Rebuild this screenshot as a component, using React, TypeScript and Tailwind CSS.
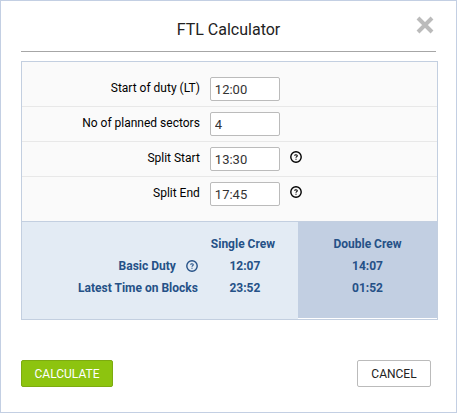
import { useState } from "react";

function HelpIcon() {
  return (
    <svg width="12" height="12" viewBox="0 0 12 12" fill="none" stroke="currentColor" aria-hidden="true">
      <circle cx="6" cy="6" r="5.2" strokeWidth="1.4" />
      <path d="M4.7 4.8C4.7 3.4 7.3 3.4 7.3 4.8C7.3 5.7 6 5.7 6 6.8" strokeWidth="1.1" />
      <path d="M6 7.7V8.8" strokeWidth="1.1" />
    </svg>
  );
}

function HelpButton({ label }: { label: string }) {
  return (
    <button type="button" aria-label={label} className="block size-3 cursor-pointer">
      <HelpIcon />
    </button>
  );
}

type FieldProps = { id: string; label: string; initial: string; help?: boolean };

function Field({ id, label, initial, help }: FieldProps) {
  const [value, setValue] = useState(initial);
  return (
    <div className="flex border-b border-[#e8e8e8] pt-[5px] pb-[5px] first:pt-[15px] last:border-b-0 last:pb-[15px]">
      <label htmlFor={id} className="w-3/7 pt-[3px] text-right leading-4">
        {label}
      </label>
      <input
        id={id}
        value={value}
        onChange={(e) => setValue(e.target.value)}
        className="ml-2.5 h-6 w-[70px] rounded-xs border border-[#bbbbbb] bg-white px-1 pt-px text-[13px] text-[#333333] outline-none"
      />
      {help && (
        <div className="ml-2.5 pt-1">
          <HelpButton label={`Help: ${label}`} />
        </div>
      )}
    </div>
  );
}

export default function App() {
  return (
    <div
      role="dialog"
      aria-labelledby="title"
      className="border border-[#c3cfe3] bg-white pr-[18px] pb-[25px] pl-5 font-[Roboto,sans-serif] text-xs text-black"
    >
      <header className="relative mr-0.5 flex h-[51px] items-center justify-center border-b border-[#a6a6a6] pt-2">
        <h1 id="title" className="text-base text-[#222222]">
          FTL Calculator
        </h1>
        <button type="button" aria-label="Close" className="absolute top-[15px] right-0.5 cursor-pointer text-[#bbbbbb]">
          <svg width="18" height="18" viewBox="0 0 18 18" stroke="currentColor" strokeWidth="4" aria-hidden="true">
            <path d="M2 2L16 16M16 2L2 16" />
          </svg>
        </button>
      </header>

      <form onSubmit={(e) => e.preventDefault()}>
        <section className="mt-[9px] border border-[#c3cfe0]">
          <div className="border-b border-[#c3cfe0] bg-[#fafafa]">
            <Field id="start" label="Start of duty (LT)" initial="12:00" />
            <Field id="sectors" label="No of planned sectors" initial="4" />
            <Field id="split-start" label="Split Start" initial="13:30" help />
            <Field id="split-end" label="Split End" initial="17:45" help />
          </div>

          <table className="w-full table-fixed bg-[#e3ebf4] text-center font-bold leading-[22px] text-[#255187]">
            <thead>
              <tr>
                <td className="w-3/7" />
                <th scope="col" className="pt-[11px] pr-3">
                  Single Crew
                </th>
                <th scope="col" className="w-[139px] bg-[#c2cfe2] pt-[11px]">
                  Double Crew
                </th>
              </tr>
            </thead>
            <tbody>
              <tr>
                <th scope="row" className="pr-0.5">
                  <div className="flex items-center justify-end gap-2.5">
                    Basic Duty
                    <HelpButton label="Help: Basic Duty" />
                  </div>
                </th>
                <td className="pr-2">12:07</td>
                <td className="bg-[#c2cfe2]">14:07</td>
              </tr>
              <tr>
                <th scope="row" className="pr-0.5 pb-[19px] text-right">
                  Latest Time on Blocks
                </th>
                <td className="pr-2 pb-[19px]">23:52</td>
                <td className="border-b border-white bg-[#c2cfe2] pb-[19px]">01:52</td>
              </tr>
            </tbody>
          </table>
        </section>

        <div className="mt-10 flex items-center justify-between">
          <button
            type="submit"
            className="h-[27px] w-[92px] cursor-pointer rounded-xs border border-[#7dab10] bg-[#8dc40f] text-white"
          >
            CALCULATE
          </button>
          <button
            type="button"
            className="mr-[7px] h-[27px] w-[74px] cursor-pointer rounded-xs border border-[#bbbbbb] bg-white text-[#222222]"
          >
            CANCEL
          </button>
        </div>
      </form>
    </div>
  );
}
